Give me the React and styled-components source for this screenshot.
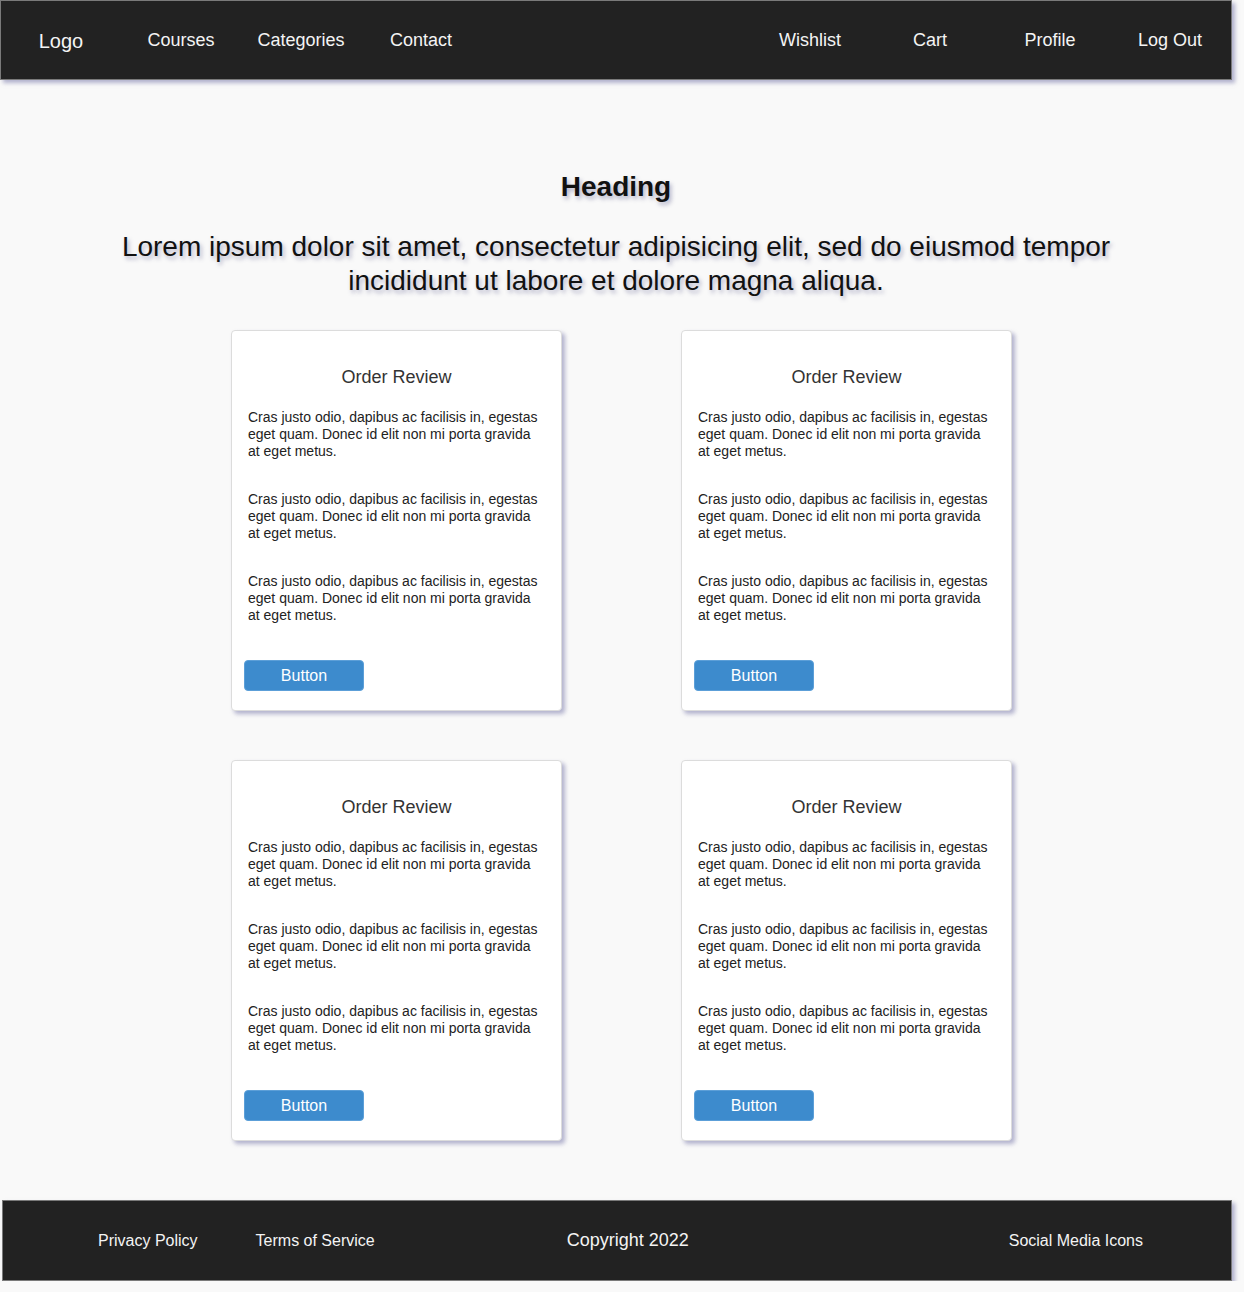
import styled, { createGlobalStyle } from 'styled-components';

const GlobalStyle = createGlobalStyle`
  body {
    margin: 0;
    background: #f9f9f9;
    font-family: "Liberation Sans", Arial, sans-serif;
    color: #222;
  }
`;

const Page = styled.div`
  width: 1232px;
`;

const Header = styled.header`
  box-sizing: border-box;
  height: 80px;
  background: #222;
  border: 1px solid #7a7a7a;
  box-shadow: 3px 3px 4px rgba(120, 120, 170, 0.55);
  display: flex;
  align-items: center;
  justify-content: space-between;
  padding-right: 1px;
`;

const NavGroup = styled.nav`
  display: flex;
  align-items: center;
`;

const NavItem = styled.a`
  width: 120px;
  text-align: center;
  color: #f4f4f4;
  font-size: ${(p) => (p.$logo ? '20px' : '18px')};
  margin-top: ${(p) => (p.$logo ? '2px' : '0')};
  text-decoration: none;
  cursor: pointer;
`;

const Main = styled.main`
  padding: 91px 0 59px;
  display: flex;
  flex-direction: column;
  align-items: center;
`;

const Heading = styled.h1`
  margin: 0;
  font-size: 28px;
  line-height: 32px;
  font-weight: bold;
  color: #111;
  text-shadow: 2px 3px 4px rgba(90, 90, 140, 0.45);
`;

const Lead = styled.p`
  margin: 27px 0 0;
  width: 1010px;
  text-align: center;
  font-size: 28px;
  line-height: 34px;
  color: #111;
  text-shadow: 2px 3px 4px rgba(90, 90, 140, 0.45);
`;

const CardGrid = styled.div`
  margin-top: 32px;
  padding-left: 11px;
  display: grid;
  grid-template-columns: repeat(2, 331px);
  column-gap: 119px;
  row-gap: 49px;
`;

const Card = styled.section`
  box-sizing: border-box;
  height: 381px;
  background: #fff;
  border: 1px solid #dcdcdc;
  border-radius: 4px;
  box-shadow: 3px 3px 4px rgba(120, 120, 170, 0.55);
  padding: 36px 12px 19px;
  display: flex;
  flex-direction: column;
`;

const CardTitle = styled.h2`
  margin: 0;
  text-align: center;
  font-size: 18px;
  line-height: 21px;
  font-weight: normal;
  color: #333;
`;

const CardText = styled.p`
  margin: ${(p) => (p.$first ? '21px' : '31px')} 4px 0;
  font-size: 14px;
  line-height: 17px;
  color: #222;
`;

const Button = styled.button`
  margin-top: auto;
  width: 120px;
  height: 31px;
  background: #3d8bcd;
  border: 1px solid #5c9fd8;
  border-radius: 4px;
  color: #fff;
  font-family: inherit;
  font-size: 16px;
  cursor: pointer;
`;

const Footer = styled.footer`
  box-sizing: border-box;
  margin-left: 2px;
  width: 1230px;
  height: 81px;
  background: #222;
  border: 1px solid #7a7a7a;
  box-shadow: 3px 3px 4px rgba(120, 120, 170, 0.55);
  display: flex;
  align-items: center;
  padding: 0 88px 0 95px;
  color: #f4f4f4;
`;

const FooterLinks = styled.div`
  display: flex;
  gap: 58px;
`;

const FooterLink = styled.a`
  font-size: 16px;
  color: #f4f4f4;
  text-decoration: none;
  cursor: pointer;
`;

const Copyright = styled.span`
  margin-left: 192px;
  font-size: 18px;
`;

const Social = styled(FooterLink)`
  margin-left: auto;
`;

const text =
  'Cras justo odio, dapibus ac facilisis in, egestas eget quam. Donec id elit non mi porta gravida at eget metus.';

const OrderCard = () => (
  <Card>
    <CardTitle>Order Review</CardTitle>
    <CardText $first>{text}</CardText>
    <CardText>{text}</CardText>
    <CardText>{text}</CardText>
    <Button>Button</Button>
  </Card>
);

const App = () => {
  return (
    <Page>
      <GlobalStyle />
      <Header>
        <NavGroup>
          <NavItem $logo>Logo</NavItem>
          <NavItem>Courses</NavItem>
          <NavItem>Categories</NavItem>
          <NavItem>Contact</NavItem>
        </NavGroup>
        <NavGroup>
          <NavItem>Wishlist</NavItem>
          <NavItem>Cart</NavItem>
          <NavItem>Profile</NavItem>
          <NavItem>Log Out</NavItem>
        </NavGroup>
      </Header>

      <Main>
        <Heading>Heading</Heading>
        <Lead>
          Lorem ipsum dolor sit amet, consectetur adipisicing elit, sed do eiusmod tempor
          incididunt ut labore et dolore magna aliqua.
        </Lead>
        <CardGrid>
          {[0, 1, 2, 3].map((i) => (
            <OrderCard key={i} />
          ))}
        </CardGrid>
      </Main>

      <Footer>
        <FooterLinks>
          <FooterLink>Privacy Policy</FooterLink>
          <FooterLink>Terms of Service</FooterLink>
        </FooterLinks>
        <Copyright>Copyright 2022</Copyright>
        <Social>Social Media Icons</Social>
      </Footer>
    </Page>
  );
};

export default App;
